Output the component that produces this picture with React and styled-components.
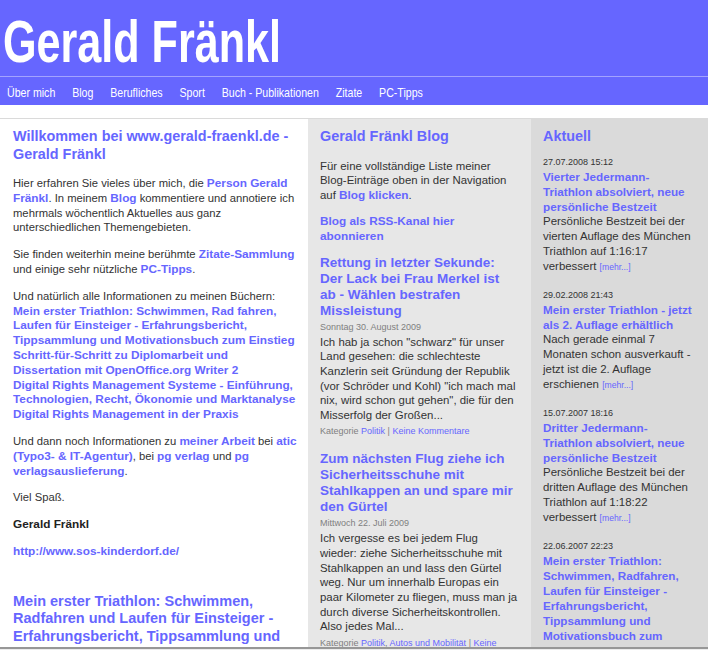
import React from "react";
import styled, { createGlobalStyle } from "styled-components";

const GlobalStyle = createGlobalStyle`
  html, body { margin: 0; padding: 0; overflow: hidden; background: #fff; }
  body { font-family: "Liberation Sans", Arial, sans-serif; color: #333; }
`;

const BLUE = "#6666ff";

const Header = styled.header`
  background: ${BLUE};
`;

const TitleBar = styled.div`
  height: 77px;
  box-sizing: border-box;
  padding: 13px 0 0 3px;
  border-bottom: 1px solid #a3a3ff;
  overflow: hidden;
`;

const Title = styled.h1`
  margin: 0;
  display: inline-block;
  font: bold 59px/1 "Liberation Sans", Arial, sans-serif;
  color: #fff;
  white-space: nowrap;
  transform: scaleX(0.731);
  transform-origin: left top;
`;

const Nav = styled.nav`
  height: 28px;
  box-sizing: border-box;
  padding: 4px 0 0 7px;
  overflow: hidden;
`;

const NavList = styled.div`
  display: flex;
  gap: 20.7px;
  white-space: nowrap;
  transform: scaleX(0.815);
  transform-origin: left center;
`;

const NavLink = styled.a`
  font: 13px/24px "Liberation Sans", Arial, sans-serif;
  color: #fff;
  text-decoration: none;
`;

const Divider = styled.div`
  height: 13px;
  border-bottom: 1px solid #dadada;
`;

const Columns = styled.div`
  display: grid;
  grid-template-columns: 308px 223px 177px;
  min-height: calc(100vh - 119px);
`;

const Column = styled.div`
  background: ${(p) => p.$bg};
  padding: ${(p) => p.$pad};
  box-sizing: border-box;
  min-width: 0;
`;

const Heading = styled.h2`
  margin: ${(p) => p.$margin || "0 0 13px"};
  font: bold ${(p) => p.$size || "14.4px"}/17.5px "Liberation Sans", Arial, sans-serif;
  color: ${BLUE};
`;

const Para = styled.p`
  margin: 0 0 ${(p) => p.$gap || "12px"};
  font-size: ${(p) => p.$size || "11.25px"};
  line-height: ${(p) => p.$lh || "14.8px"};
  color: #333;
`;

const Link = styled.a`
  color: ${BLUE};
  text-decoration: none;
`;

const BoldLink = styled(Link)`
  font-weight: bold;
  font-size: 11.8px;
`;

const Strong = styled.strong`
  color: #222;
  font-size: 11.8px;
`;

const Entry = styled.article`
  margin-bottom: 14px;
`;

const EntryTitle = styled.h3`
  margin: 0;
  padding-right: 2px;
  font: bold 13.5px/16px "Liberation Sans", Arial, sans-serif;
  color: ${BLUE};
`;

const Meta = styled.div`
  margin-top: ${(p) => p.$top || "2px"};
  font-size: 9px;
  line-height: 12px;
  color: ${(p) => p.$color || "#808080"};
`;

const EntryText = styled.p`
  margin: 2px 0 0;
  font-size: 11.42px;
  line-height: 14.7px;
  color: #333;
`;

const NewsItem = styled.div`
  margin-bottom: 14px;
`;

const NewsTitle = styled.a`
  display: block;
  margin-top: 1px;
  font: bold 11.7px/15px "Liberation Sans", Arial, sans-serif;
  color: ${BLUE};
  text-decoration: none;
`;

const NewsText = styled.p`
  margin: 0;
  font-size: 11.45px;
  line-height: 15px;
  color: #333;
`;

const More = styled.a`
  font-size: 8.6px;
  color: ${BLUE};
  text-decoration: none;
`;

const BottomEdge = styled.div`
  position: fixed;
  left: 0;
  right: 0;
  bottom: 0;
  height: 1px;
  border-top: 2px solid #979797;
  background: #ececec;
`;

const navItems = [
  "Über mich",
  "Blog",
  "Berufliches",
  "Sport",
  "Buch - Publikationen",
  "Zitate",
  "PC-Tipps",
];

const blogEntries = [
  {
    title:
      "Rettung in letzter Sekunde: Der Lack bei Frau Merkel ist ab - Wählen bestrafen Missleistung",
    date: "Sonntag 30. August 2009",
    text:
      'Ich hab ja schon "schwarz" für unser Land gesehen: die schlechteste Kanzlerin seit Gründung der Republik (vor Schröder und Kohl) "ich mach mal nix, wird schon gut gehen", die für den Misserfolg der Großen...',
    cats: ["Politik"],
  },
  {
    title:
      "Zum nächsten Flug ziehe ich Sicherheitsschuhe mit Stahlkappen an und spare mir den Gürtel",
    date: "Mittwoch 22. Juli 2009",
    text:
      "Ich vergesse es bei jedem Flug wieder: ziehe Sicherheitsschuhe mit Stahlkappen an und lass den Gürtel weg. Nur um innerhalb Europas ein paar Kilometer zu fliegen, muss man ja durch diverse Sicherheitskontrollen. Also jedes Mal...",
    cats: ["Politik", "Autos und Mobilität"],
  },
];

const news = [
  {
    date: "27.07.2008 15:12",
    title: "Vierter Jedermann-Triathlon absolviert, neue persönliche Bestzeit",
    text: "Persönliche Bestzeit bei der vierten Auflage des München Triathlon auf 1:16:17 verbessert",
  },
  {
    date: "29.02.2008 21:43",
    title: "Mein erster Triathlon - jetzt als 2. Auflage erhältlich",
    text: "Nach gerade einmal 7 Monaten schon ausverkauft - jetzt ist die 2. Auflage erschienen",
  },
  {
    date: "15.07.2007 18:16",
    title: "Dritter Jedermann-Triathlon absolviert, neue persönliche Bestzeit",
    text: "Persönliche Bestzeit bei der dritten Auflage des München Triathlon auf 1:18:22 verbessert",
  },
  {
    date: "22.06.2007 22:23",
    title:
      'Mein erster Triathlon: Schwimmen, Radfahren, Laufen für Einsteiger - Erfahrungsbericht, Tippsammlung und Motivationsbuch zum Einstieg" ist erschienen',
    text: "Das Buch ist ab sofort im Handel erhältlich",
  },
];

export default function App() {
  return (
    <>
      <GlobalStyle />
      <Header>
        <TitleBar>
          <Title>Gerald Fränkl</Title>
        </TitleBar>
        <Nav>
          <NavList>
            {navItems.map((n) => (
              <NavLink key={n} href="#">
                {n}
              </NavLink>
            ))}
          </NavList>
        </Nav>
      </Header>
      <Divider />
      <Columns>
        <Column $bg="#fff" $pad="9px 10px 0 13px">
          <Heading>Willkommen bei www.gerald-fraenkl.de - Gerald Fränkl</Heading>
          <Para>
            Hier erfahren Sie vieles über mich, die{" "}
            <BoldLink href="#">Person Gerald Fränkl</BoldLink>. In meinem{" "}
            <BoldLink href="#">Blog</BoldLink> kommentiere und annotiere ich mehrmals
            wöchentlich Aktuelles aus ganz unterschiedlichen Themengebieten.
          </Para>
          <Para>
            Sie finden weiterhin meine berühmte{" "}
            <BoldLink href="#">Zitate-Sammlung</BoldLink> und einige sehr nützliche{" "}
            <BoldLink href="#">PC-Tipps</BoldLink>.
          </Para>
          <Para>
            Und natürlich alle Informationen zu meinen Büchern:
            <br />
            <BoldLink href="#">
              Mein erster Triathlon: Schwimmen, Rad fahren, Laufen für Einsteiger -
              Erfahrungsbericht, Tippsammlung und Motivationsbuch zum Einstieg
            </BoldLink>
            <br />
            <BoldLink href="#">
              Schritt-für-Schritt zu Diplomarbeit und Dissertation mit OpenOffice.org Writer 2
            </BoldLink>
            <br />
            <BoldLink href="#">
              Digital Rights Management Systeme - Einführung, Technologien, Recht,
              Ökonomie und Marktanalyse
            </BoldLink>
            <br />
            <BoldLink href="#">Digital Rights Management in der Praxis</BoldLink>
          </Para>
          <Para>
            Und dann noch Informationen zu <BoldLink href="#">meiner Arbeit</BoldLink> bei{" "}
            <BoldLink href="#">atic (Typo3- &amp; IT-Agentur)</BoldLink>, bei{" "}
            <BoldLink href="#">pg verlag</BoldLink> und{" "}
            <BoldLink href="#">pg verlagsauslieferung</BoldLink>.
          </Para>
          <Para>Viel Spaß.</Para>
          <Para>
            <Strong>Gerald Fränkl</Strong>
          </Para>
          <Para>
            <BoldLink href="#">http://www.sos-kinderdorf.de/</BoldLink>
          </Para>
          <Heading $margin="34px 0 13px" $size="14.5px">
            Mein erster Triathlon: Schwimmen, Radfahren und Laufen für Einsteiger -
            Erfahrungsbericht, Tippsammlung und Motivationsbuch zum Einstieg
          </Heading>
          <Para>
            Das Buch für alle, die sich zum ersten Mal an einen Triathlon wagen wollen.
          </Para>
        </Column>

        <Column $bg="#e7e7e7" $pad="9px 13.3px 0 12px">
          <Heading>Gerald Fränkl Blog</Heading>
          <Para $size="11.42px" $lh="14.7px" $gap="11.5px">
            Für eine vollständige Liste meiner Blog-Einträge oben in der Navigation auf{" "}
            <BoldLink href="#">Blog klicken</BoldLink>.
          </Para>
          <Para $size="11.42px" $lh="14.7px" $gap="11px">
            <BoldLink href="#">Blog als RSS-Kanal hier abonnieren</BoldLink>
          </Para>
          {blogEntries.map((e) => (
            <Entry key={e.title}>
              <EntryTitle>{e.title}</EntryTitle>
              <Meta>{e.date}</Meta>
              <EntryText>{e.text}</EntryText>
              <Meta $top="2.5px">
                Kategorie{" "}
                {e.cats.map((c, i) => (
                  <React.Fragment key={c}>
                    {i > 0 && ", "}
                    <Link href="#">{c}</Link>
                  </React.Fragment>
                ))}{" "}
                | <Link href="#">Keine Kommentare</Link>
              </Meta>
            </Entry>
          ))}
        </Column>

        <Column $bg="#dadada" $pad="9px 12px 0 12px">
          <Heading $margin="0 0 10.5px">Aktuell</Heading>
          {news.map((n) => (
            <NewsItem key={n.date}>
              <Meta $top="0" $color="#333">{n.date}</Meta>
              <NewsTitle href="#">{n.title}</NewsTitle>
              <NewsText>
                {n.text} <More href="#">[mehr...]</More>
              </NewsText>
            </NewsItem>
          ))}
        </Column>
      </Columns>
      <BottomEdge />
    </>
  );
}
